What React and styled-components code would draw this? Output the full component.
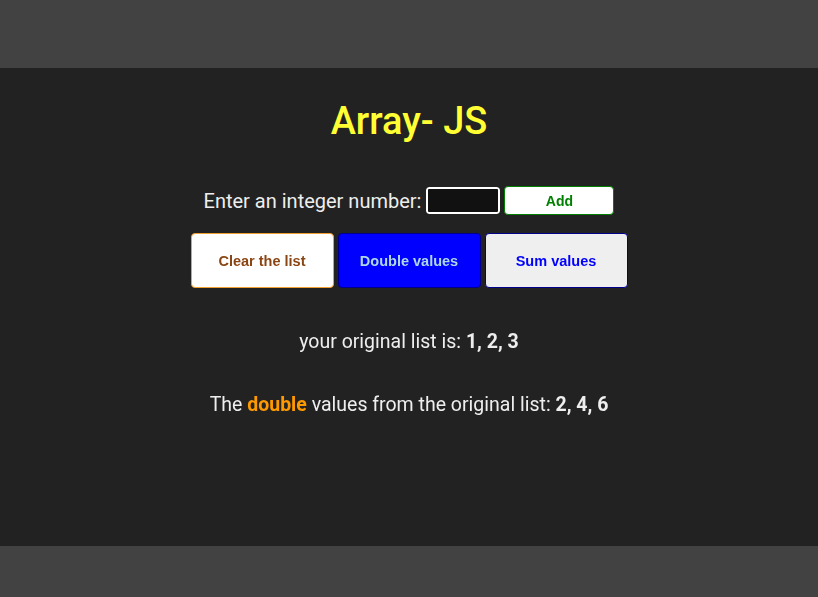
import React, { useState } from 'react';
import styled, { createGlobalStyle } from 'styled-components';

const GlobalStyle = createGlobalStyle`
  html, body {
    margin: 0;
    padding: 0;
    background-color: #424242;
    font-family: Roboto, "Liberation Sans", Arial, sans-serif;
  }
`;

const Page = styled.div`
  padding: 68px 0 51px;
`;

const Panel = styled.main`
  background-color: #222222;
  height: 478px;
  display: flex;
  flex-direction: column;
  align-items: center;
  color: #eeeeee;
`;

const Title = styled.h1`
  margin: 28px 0 0;
  font-size: 38px;
  font-weight: 500;
  color: #ffff33;
  line-height: 50px;
`;

const InputRow = styled.div`
  margin-top: 40px;
  display: flex;
  align-items: center;
  gap: 4px;
  font-size: 20px;
`;

const NumberInput = styled.input`
  width: 74px;
  height: 27px;
  box-sizing: border-box;
  background: #111;
  border: 2px solid #fff;
  border-radius: 3px;
  outline: 1px solid #222;
  color: #fff;
  caret-color: #fff;
  font-size: 16px;
  padding: 0 4px;
  margin-left: 1px;

  &:focus {
    outline: 1px solid #222;
  }
`;

const AddButton = styled.button`
  width: 110px;
  height: 29px;
  background: #fff;
  border: 1px solid green;
  border-radius: 4px;
  color: green;
  font-family: "Liberation Sans", Arial, sans-serif;
  font-weight: bold;
  font-size: 14px;
`;

const ButtonRow = styled.div`
  margin-top: 18px;
  display: flex;
  gap: 4px;
`;

const ActionButton = styled.button`
  width: 143px;
  height: 55px;
  border-radius: 4px;
  border: 1px solid ${p => p.$border};
  background: ${p => p.$bg};
  color: ${p => p.$color};
  font-family: "Liberation Sans", Arial, sans-serif;
  font-weight: bold;
  font-size: 14.5px;
`;

const Line = styled.p`
  margin: ${p => p.$top}px 0 0;
  font-size: 19.5px;
  line-height: 24px;
`;

const Strong = styled.b`
  font-weight: bold;
  color: ${p => p.$color || 'inherit'};
`;

export default function App() {
  const [value, setValue] = useState('');
  const list = [1, 2, 3];

  return (
    <>
      <GlobalStyle />
      <Page>
        <Panel>
          <Title>Array- JS</Title>
          <InputRow>
            <span>Enter an integer number:</span>
            <NumberInput autoFocus value={value} onChange={e => setValue(e.target.value)} />
            <AddButton>Add</AddButton>
          </InputRow>
          <ButtonRow>
            <ActionButton $bg="#ffffff" $border="#f0a030" $color="#8b4513">Clear the list</ActionButton>
            <ActionButton $bg="#0000ff" $border="#00008b" $color="#add8e6">Double values</ActionButton>
            <ActionButton $bg="#efefef" $border="#00008b" $color="#0000ff">Sum values</ActionButton>
          </ButtonRow>
          <Line $top={42}>
            your original list is: <Strong>{list.join(', ')}</Strong>
          </Line>
          <Line $top={39}>
            The <Strong $color="#ff9900">double</Strong> values from the original list:{' '}
            <Strong>{list.map(n => n * 2).join(', ')}</Strong>
          </Line>
        </Panel>
      </Page>
    </>
  );
}
